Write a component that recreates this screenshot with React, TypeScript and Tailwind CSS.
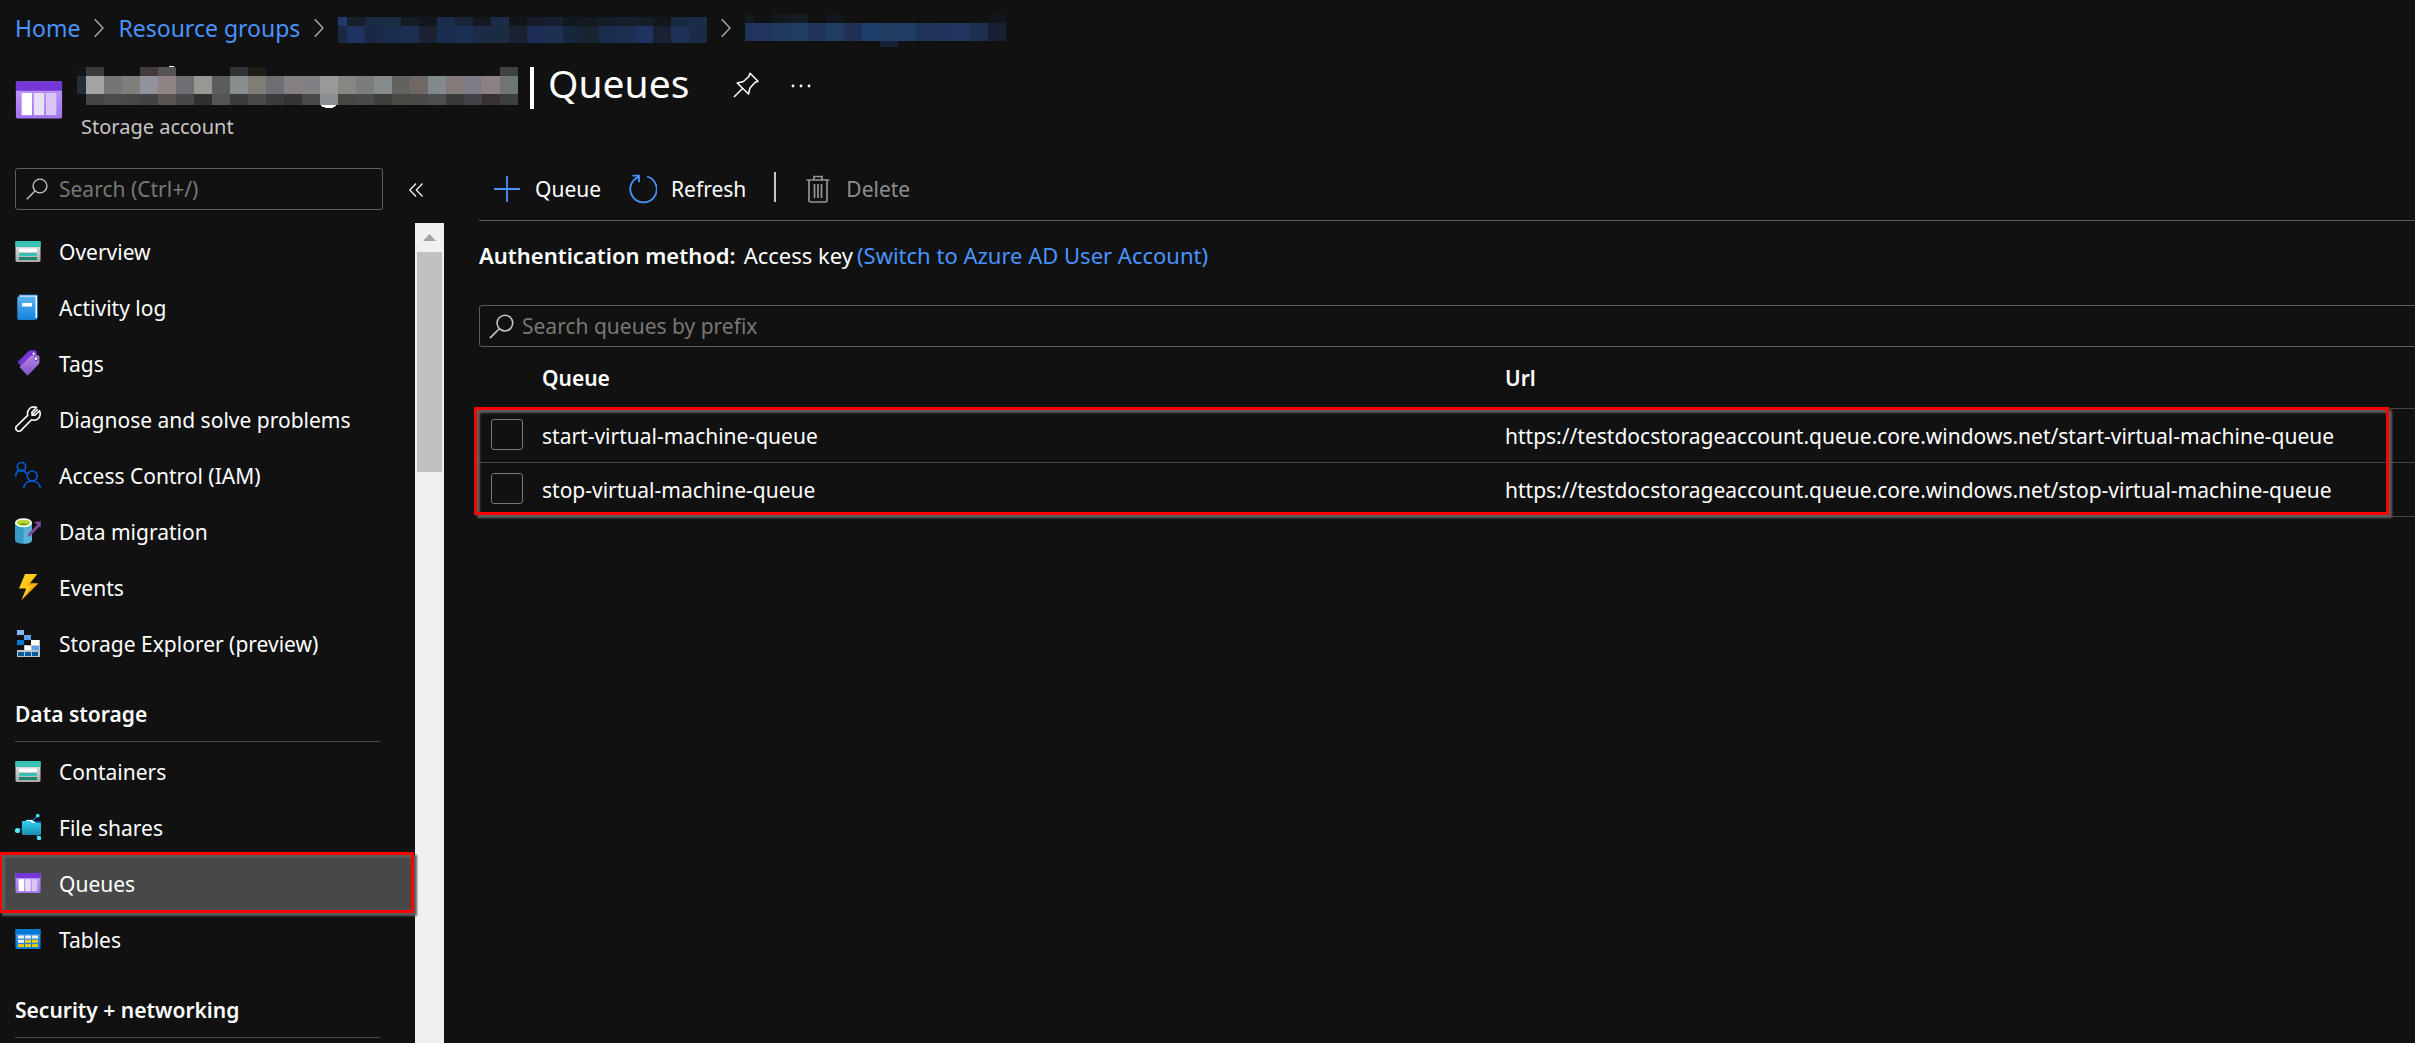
import React from "react";

type Tile = string | null;

function Mosaic({ rows, heights, firstY, label, className, extra }: {
  rows: Tile[][];
  heights: number[];
  firstY: number;
  label: string;
  className?: string;
  extra?: React.ReactNode;
}) {
  const width = 9 + 18 * (Math.max(...rows.map((r) => r.length)) - 1);
  const tops = heights.map((_, i) => firstY + heights.slice(0, i).reduce((a, b) => a + b, 0));
  const height = 44;
  return (
    <svg role="img" aria-label={label} width={width} height={height} viewBox={`0 0 ${width} ${height}`} shapeRendering="crispEdges" className={className}>
      {extra}
      {rows.map((row, r) =>
        row.map((c, i) =>
          c ? <rect key={`${r}-${i}`} x={i === 0 ? 0 : 9 + 18 * (i - 1)} y={tops[r]} width={i === 0 ? 9 : 18} height={heights[r]} fill={c} /> : null,
        ),
      )}
    </svg>
  );
}

const groupTiles: Tile[][] = [
  ["#20386a", "#16202b", "#1a2b45", "#1a2b42", "#151c26", "#12171d", "#1a2c4b", "#172438", "#15181f", "#1b2c48", "#121619", "#161c2a", "#152030", "#12181f", "#131a22", "#141d28", "#16202e", "#151d29", "#12171b", "#192a40", "#1a2c47"],
  ["#1b2844", "#1f3260", "#1b2843", "#1b2d4e", "#1b2f50", "#1a2131", "#1a2d4e", "#1b3053", "#1b2b45", "#1a2b42", "#1a2133", "#1c2c54", "#1d304f", "#17263f", "#18242e", "#1b2d4c", "#1c2f4e", "#1f3260", "#1b2132", "#1d3257", "#1b2b45"],
];

const accountTiles: Tile[][] = [
  ["#12181e", null, "#13171f", "#131c23", null, "#11151c", null, null, null, null, null, null, null, null, "#12151c"],
  ["#1e345e", "#20345f", "#20395f", "#213d60", "#1e345a", "#203c62", "#1f3052", "#203e6b", "#203c60", "#203e65", "#1e3358", "#1e3459", "#203660", "#1d304e", "#182034"],
  [null, null, null, null, null, null, null, null, "#182134"],
];

const titleTiles: Tile[][] = [
  ["#111619", "#3a3b3a", null, null, "#413b3e", "#575253", null, null, null, "#2f3334", "#201c17", null, null, null, null, null, null, null, null, null, null, null, null, null, "#3f4242"],
  ["#252d37", "#a2a3a2", "#757575", "#7e7e7b", "#92929c", "#918583", "#6e6e73", "#989893", "#5b5e5d", "#888d8e", "#7e7d76", "#6f6e75", "#868180", "#838085", "#98999b", "#868682", "#7c7c7b", "#868b8b", "#62625f", "#6f6864", "#838a8d", "#847a78", "#7d7c87", "#8c8282", "#707576"],
  [null, "#444546", "#4b4b4b", "#494845", "#434345", "#5b5552", "#47484a", "#303030", "#555556", "#3b3b3b", "#4a4a4a", "#3b3b3b", "#343434", "#4c4a48", "#8b8e92", "#474643", "#4a4a4a", "#3e3e3b", "#4a4946", "#4a4a48", "#4c4e50", "#38393b", "#454247", "#363233", "#3c3f3f"],
];

function Chevron() {
  return (
    <svg aria-hidden="true" width="10" height="20" viewBox="0 0 10 20" fill="none" stroke="#b3b0ad" strokeWidth="1.3" className="shrink-0">
      <path d="M0.7 1.2 9 10 0.7 18.8" />
    </svg>
  );
}

function SearchIcon({ size = 22 }: { size?: number }) {
  return (
    <svg aria-hidden="true" width={size} height={size} viewBox="0 0 22 22" fill="none" stroke="#c8c6c4" strokeWidth="1.4" className="shrink-0">
      <circle cx="14" cy="8" r="6.9" />
      <path d="M9 13 0.8 21.2" />
    </svg>
  );
}

function ListIcon() {
  return (
    <svg width="26" height="26" viewBox="0 0 26 26">
      <defs>
        <linearGradient id="listBase" x1="0" y1="0" x2="0" y2="1">
          <stop offset="0" stopColor="#ececec" />
          <stop offset="1" stopColor="#a8a8a8" />
        </linearGradient>
      </defs>
      <rect x="0.5" y="3" width="25" height="21" rx="1" fill="url(#listBase)" />
      <path d="M1.5 3h23a1 1 0 0 1 1 1v5H0.500V4a1 1 0 0 1 1-1z" fill="#37c2b1" />
      <rect x="4" y="10.500" width="18" height="3.500" fill="#fff" />
      <rect x="4" y="15" width="18" height="3" fill="#37c2b1" />
      <rect x="4" y="19" width="18" height="3" fill="#258277" />
    </svg>
  );
}

function ActivityIcon() {
  return (
    <svg width="26" height="26" viewBox="0 0 26 26">
      <defs>
        <linearGradient id="book" x1="0" y1="0" x2="0" y2="1">
          <stop offset="0" stopColor="#5eb2f0" />
          <stop offset="1" stopColor="#1483dc" />
        </linearGradient>
      </defs>
      <path d="M4 0.500h17.500a1.500 1.500 0 0 1 1.500 1.500v20c0 2-1 4-2.500 4H4z" fill="#1a77c9" />
      <path d="M4.500 1.500H22V24h-3V4H4.500z" fill="#fff" />
      <path d="M3.500 2.500H19.500a1 1 0 0 1 1 1V26H4A1.700 1.700 0 0 1 2.300 24.300V3.700A1.200 1.200 0 0 1 3.500 2.500z" fill="url(#book)" />
      <rect x="7" y="9" width="10" height="3.500" fill="#fff" />
    </svg>
  );
}

function TagsIcon() {
  return (
    <svg width="26" height="26" viewBox="0 0 26 26">
      <defs>
        <linearGradient id="tag" x1="0" y1="0" x2="0" y2="1">
          <stop offset="0" stopColor="#b98ae6" />
          <stop offset="1" stopColor="#7f50c4" />
        </linearGradient>
      </defs>
      <path d="M2.500 12 13.500 1.200Q14.500 0.300 16 0.300h4q1.800 0 1.800 1.800V7L8 18.500z" fill="#7637d8" />
      <path d="M4.500 17 15.500 6.200Q16.500 5.300 18 5.200h4.500q1.900 0 1.900 1.900v5.200q0 1.300-1 2.200L12.500 25.700z" fill="url(#tag)" />
      <circle cx="18.700" cy="3.700" r="1.700" fill="#fff" stroke="#4d2392" strokeWidth="0.800" />
      <circle cx="21" cy="8.700" r="1.900" fill="#fff" stroke="#5d3aa5" strokeWidth="1" />
    </svg>
  );
}

function WrenchIcon() {
  return (
    <svg width="26" height="26" viewBox="0 0 26 26" fill="none" stroke="#fff" strokeWidth="1.600" strokeLinejoin="round">
      <path d="M22.800 3.200 18.500 7.500 18 8.500 20 9.200 24.500 4.700Q26.300 9 23.500 12.200 20.700 15.200 16.500 13.800L6 24.400Q4.200 26 2 24.600-0.100 22.700 1.300 20.500L12.700 9.400Q11.800 5.200 14.600 2.500 17.500-0.100 21.500 1.500L17 6V9.300H20" />
    </svg>
  );
}

function PeopleIcon() {
  return (
    <svg width="26" height="26" viewBox="0 0 26 26" fill="none" stroke="#015cda" strokeWidth="1.600">
      <circle cx="6.500" cy="4.700" r="4.200" />
      <circle cx="17.200" cy="14" r="5" />
      <path d="M0.700 14.500C0.700 6.800 9.500 6.800 11.500 12M8.600 26.500C9.500 16.500 24 16.500 25.500 26.500" />
    </svg>
  );
}

function MigrationIcon() {
  return (
    <svg width="26" height="26" viewBox="0 0 26 26">
      <path d="M0 4.500V22q0 3.700 8.500 3.700T17 22V4.500z" fill="#3999c6" />
      <path d="M8.500 4.500V25.700Q17 25.700 17 22V4.500z" fill="#5bb0d5" />
      <ellipse cx="8.500" cy="4.700" rx="8.500" ry="4.500" fill="#fff" />
      <ellipse cx="8.500" cy="4.700" rx="6.800" ry="3" fill="#b8d432" />
      <path d="M4 6.200q4.500-2 9 0-4 2.300-9 0z" fill="#5ea60a" />
      <path d="M14.500 16.800 22.500 8.500" stroke="#804998" strokeWidth="3" strokeLinecap="round" />
      <path d="M19.300 4 26 3.300 25.400 10z" fill="#804998" />
    </svg>
  );
}

function BoltIcon() {
  return (
    <svg width="26" height="26" viewBox="0 0 26 26">
      <path d="M10 0H22.200L14.700 9.500H23L6.500 26 11.200 14.500H4z" fill="#ffca1c" />
      <path d="M22.200 0 14.700 9.500H23L6.500 26 17.500 11.500H11.500z" fill="#f9a70a" />
    </svg>
  );
}

function ExplorerIcon() {
  return (
    <svg width="26" height="28" viewBox="0 0 26 28" shapeRendering="crispEdges">
      <path d="M17 11h8v17H2v-7h7v-5h8z" fill="#bcc3cb" />
      <rect x="2" y="1" width="7" height="5" fill="#83b9f9" />
      <rect x="9" y="6" width="7" height="5" fill="#5ea0ef" />
      <rect x="2" y="11" width="7" height="5" fill="#0078d4" />
      <rect x="16" y="11" width="8" height="5" fill="#fff" />
      <rect x="10" y="17" width="6" height="4" fill="#fff" />
      <rect x="17" y="17" width="7" height="4" fill="#5ea0ef" />
      <rect x="3" y="23" width="6" height="4" fill="#005ba1" />
      <rect x="10" y="23" width="6" height="4" fill="#005ba1" />
      <rect x="17" y="23" width="6" height="4" fill="#005ba1" />
    </svg>
  );
}

function SharesIcon() {
  return (
    <svg width="26" height="26" viewBox="0 0 26 26">
      <defs>
        <linearGradient id="folder" x1="0" y1="0" x2="0" y2="1">
          <stop offset="0" stopColor="#32d4f5" />
          <stop offset="1" stopColor="#198ab3" />
        </linearGradient>
      </defs>
      <path d="M2.500 16.500 12 13 22.500 1.500M15 13l9 11" stroke="#0f6cbd" strokeWidth="1.200" fill="none" />
      <path d="M11 5.500h6l2 1.500h6.500q0.500 0 0.500 0.500v6H11z" fill="#005ba1" />
      <path d="M11 6h6l4 3h-8z" fill="#fff" />
      <path d="M8 7h6.500l3 2H25q1 0 1 1v10q0 1-1 1H8q-1 0-1-1V8q0-1 1-1z" fill="url(#folder)" />
      <circle cx="2.500" cy="16.500" r="2.600" fill="#50e6ff" />
      <circle cx="22.800" cy="1.700" r="1.800" fill="#50e6ff" />
      <circle cx="24" cy="24" r="2.200" fill="#50e6ff" />
    </svg>
  );
}

function QueueIcon({ large = false }: { large?: boolean }) {
  return (
    <svg aria-hidden="true" width={large ? 48 : 26} height={large ? 48 : 26} viewBox="0 0 26 26" className="shrink-0">
      <defs>
        <linearGradient id="queueBase" x1="0" y1="0" x2="0" y2="1">
          <stop offset="0" stopColor="#c09cfa" />
          <stop offset="1" stopColor="#a174ee" />
        </linearGradient>
      </defs>
      <rect x="0.500" y="3" width="25" height="20" rx="0.800" fill="url(#queueBase)" />
      <path d="M1.300 3h23.400a0.800 0.800 0 0 1 0.800 0.800V8H0.500V3.800A0.800 0.800 0 0 1 1.300 3z" fill="#7637d8" />
      <rect x="3.600" y="9.200" width="5.600" height="12" fill="#fff" />
      <rect x="10.200" y="9.200" width="5.600" height="12" fill="#e9dffb" />
      <rect x="16.800" y="9.200" width="5.600" height="12" fill="#d8c6f6" />
    </svg>
  );
}

function TablesIcon() {
  const cells = [0, 1, 2].flatMap((r) => [0, 1, 2].map((c) => ({ r, c })));
  return (
    <svg width="26" height="26" viewBox="0 0 26 26">
      <defs>
        <linearGradient id="tableBase" x1="0" y1="0" x2="0" y2="1">
          <stop offset="0" stopColor="#5ea0ef" />
          <stop offset="1" stopColor="#0078d4" />
        </linearGradient>
      </defs>
      <rect x="0.500" y="3" width="25" height="20" rx="0.800" fill="url(#tableBase)" />
      <path d="M0.500 3h25v5h-25z" fill="#0078d4" />
      {cells.map(({ r, c }) => (
        <rect key={`${r}${c}`} x={3 + c * 7} y={9.500 + r * 4.300} width="6" height="3" fill={r === 2 || (r === 1 && c > 0) ? "#f2cc0c" : "#e8f1fc"} />
      ))}
    </svg>
  );
}

function NavItem({ icon, label, active = false }: { icon: React.ReactNode; label: string; active?: boolean }) {
  return (
    <li className="relative">
      <a href="#" aria-current={active ? "page" : undefined} className={`flex h-14 items-center gap-[18px] pl-[15px] ${active ? "bg-[#484848]" : ""}`}>
        <span aria-hidden="true" className="flex w-[26px] shrink-0 justify-center pb-[2px]">{icon}</span>
        <span className="whitespace-nowrap">{label}</span>
      </a>
      {active && <span aria-hidden="true" className="pointer-events-none absolute -top-1 right-px -bottom-px -left-px z-10 border-[3px] border-[#ff0000] shadow-[3px_3px_2px_#5e5e5e,inset_3px_3px_2px_#5e5e5e]" />}
    </li>
  );
}

function NavHeading({ children }: { children: React.ReactNode }) {
  return (
    <div className="h-[72px] pl-[15px] pr-[35px]">
      <h2 className="flex h-[70px] items-end border-b border-[#4a4a4a] pb-3 font-semibold">{children}</h2>
    </div>
  );
}

const queues = ["start-virtual-machine-queue", "stop-virtual-machine-queue"];

export default function App() {
  return (
    <div className="flex h-screen flex-col overflow-hidden bg-[#111111] font-['Noto_Sans','Open_Sans',sans-serif] text-[21px] leading-[30px] text-white">
      <nav aria-label="Breadcrumb" className="flex h-14 shrink-0 items-center gap-[14px] pl-[15px] text-[23px] text-[#4894fe]">
        <a href="#" className="whitespace-nowrap">Home</a>
        <Chevron />
        <a href="#" className="whitespace-nowrap">Resource groups</a>
        <Chevron />
        <a href="#"><Mosaic label="Hidden resource group" rows={groupTiles} heights={[9, 17]} firstY={11} /></a>
        <Chevron />
        <a href="#"><Mosaic label="Hidden storage account" rows={accountTiles} heights={[9, 18, 6]} firstY={8} /></a>
      </nav>

      <header className="flex h-28 shrink-0 items-start pl-[15px]">
        <div className="pt-5"><QueueIcon large /></div>
        <div className="pl-[14px]">
          <div className="flex h-14 items-center">
            <h1 className="flex items-center text-[39px] leading-[56px] whitespace-nowrap">
              <Mosaic
                label="Hidden account name"
                rows={titleTiles}
                heights={[9, 18, 11]}
                firstY={2}
                className="mt-[6px]"
                extra={<><rect x="92" y="1" width="5" height="1" fill="#fff" /><path d="M243 39h17q-1 4-8 4t-9-4z" fill="#fff" /></>}
              />
              <span aria-hidden="true" className="mt-2 ml-3 h-[42px] w-1 bg-white" />
              <span className="ml-[14px] pb-0.5">Queues</span>
            </h1>
            <button aria-label="Pin to dashboard" className="ml-11 pt-0.5">
              <svg width="26" height="26" viewBox="0 0 26 26" fill="none" stroke="#fff" strokeWidth="1.500" strokeLinejoin="round">
                <path d="M1 25 9.500 16.500M17 1.200 25 9.200 22 10.500 17 16 15.500 22 4.200 11 10.500 9.500 15.800 4.500z" />
              </svg>
            </button>
            <button aria-label="More" className="ml-8 pt-1">
              <svg width="20" height="4" viewBox="0 0 20 4" fill="#fff"><circle cx="2" cy="2" r="1.400" /><circle cx="10" cy="2" r="1.400" /><circle cx="18" cy="2" r="1.400" /></svg>
            </button>
          </div>
          <p className="pl-1 text-[20px] text-[#c8c6c4]">Storage account</p>
        </div>
      </header>

      <div className="flex min-h-0 flex-1">
        <aside className="flex w-[444px] shrink-0 flex-col">
          <div className="flex h-[55px] shrink-0 items-start pl-[15px]">
            <label className="flex h-[42px] w-[368px] items-center gap-[11px] rounded-[3px] border border-[#605e5c] pl-[10px]">
              <SearchIcon />
              <input type="text" aria-label="Search menu" placeholder="Search (Ctrl+/)" className="min-w-0 flex-1 bg-transparent outline-none placeholder:text-[#797775]" />
            </label>
            <button aria-label="Collapse menu" className="mt-[15px] ml-[26px]">
              <svg width="14" height="14" viewBox="0 0 14 14" fill="none" stroke="#fff" strokeWidth="1.200"><path d="M7 0.500 0.800 7 7 13.500M13.500 0.500 7.300 7 13.500 13.500" /></svg>
            </button>
          </div>
          <div className="flex min-h-0 flex-1">
            <nav aria-label="Storage account menu" className="w-[415px] shrink-0 pt-px">
              <ul>
                <NavItem icon={<ListIcon />} label="Overview" />
                <NavItem icon={<ActivityIcon />} label="Activity log" />
                <NavItem icon={<TagsIcon />} label="Tags" />
                <NavItem icon={<WrenchIcon />} label="Diagnose and solve problems" />
                <NavItem icon={<PeopleIcon />} label="Access Control (IAM)" />
                <NavItem icon={<MigrationIcon />} label="Data migration" />
                <NavItem icon={<BoltIcon />} label="Events" />
                <NavItem icon={<ExplorerIcon />} label="Storage Explorer (preview)" />
              </ul>
              <NavHeading>Data storage</NavHeading>
              <ul>
                <NavItem icon={<ListIcon />} label="Containers" />
                <NavItem icon={<SharesIcon />} label="File shares" />
                <NavItem icon={<QueueIcon />} label="Queues" active />
                <NavItem icon={<TablesIcon />} label="Tables" />
              </ul>
              <NavHeading>Security + networking</NavHeading>
            </nav>
            <div aria-hidden="true" className="flex flex-1 flex-col bg-[#f0f0f0] px-0.5">
              <div className="flex h-[29px] items-center justify-center">
                <svg width="13" height="7" viewBox="0 0 13 7" fill="#a3a3a3"><path d="M6.500 0 13 7H0z" /></svg>
              </div>
              <div className="h-[220px] bg-[#c1c1c1]" />
            </div>
          </div>
        </aside>

        <main className="min-w-0 flex-1 pl-[35px]">
          <div className="flex h-[53px] items-start border-b border-[#605e5c] pl-[14px]">
            <button className="flex h-[42px] items-center gap-[14px]">
              <svg aria-hidden="true" width="28" height="28" viewBox="0 0 28 28" stroke="#4894fe" strokeWidth="1.800"><path d="M1 14H27M14 1V27" /></svg>
              Queue
            </button>
            <button className="ml-7 flex h-[42px] items-center gap-[14px]">
              <svg aria-hidden="true" width="28" height="30" viewBox="0 0 28 30" fill="none" stroke="#4894fe" strokeWidth="1.800">
                <path d="M18 2.500A13.200 13.200 0 1 1 9.500 3M3.500 1.700H10V8.200M10 1.700 7 5" />
              </svg>
              Refresh
            </button>
            <span aria-hidden="true" className="mt-1 ml-7 h-[30px] w-0.5 bg-[#c8c6c4]" />
            <button disabled className="ml-[30px] flex h-[42px] items-center gap-4 text-[#8f8f8f]">
              <svg aria-hidden="true" width="24" height="28" viewBox="0 0 24 28" fill="none" stroke="#979593" strokeWidth="1.700">
                <path d="M0.500 5H23.500M8 5V1.500H16V5M3 5V25.500Q3 27 4.500 27H19.500Q21 27 21 25.500V5M8.500 9V23M12 9V23M15.500 9V23" />
              </svg>
              Delete
            </button>
          </div>

          <p className="flex h-[84px] items-start pt-[19px] text-[22px] whitespace-nowrap">
            <strong className="font-semibold">Authentication method:</strong>
            <span className="ml-2">Access key</span>
            <a href="#" className="ml-1 text-[#4894fe]">(Switch to Azure AD User Account)</a>
          </p>

          <label className="-mr-1 flex h-[42px] items-center gap-2 rounded-[3px] border border-[#605e5c] pl-[9px]">
            <SearchIcon size={25} />
            <input type="text" aria-label="Search queues" placeholder="Search queues by prefix" className="min-w-0 flex-1 bg-transparent outline-none placeholder:text-[#797775]" />
          </label>

          <div className="relative">
            <table className="w-full table-fixed border-collapse text-left">
              <colgroup>
                <col className="w-[63px]" />
                <col className="w-[963px]" />
                <col />
              </colgroup>
              <thead>
                <tr className="h-[61px] border-b border-[#484644]">
                  <th scope="col" aria-label="Select" />
                  <th scope="col" className="pt-0.5 font-semibold">Queue</th>
                  <th scope="col" className="pt-0.5 font-semibold">Url</th>
                </tr>
              </thead>
              <tbody>
                {queues.map((q) => (
                  <tr key={q} className="h-[54px] border-b border-[#484644]">
                    <td className="pb-0.5 pl-3">
                      <input type="checkbox" aria-label={`Select ${q}`} className="block h-[31px] w-8 appearance-none rounded-[3px] border border-[#797775] checked:bg-[#4894fe]" />
                    </td>
                    <td className="pt-0.5">{q}</td>
                    <td className="pt-0.5 whitespace-nowrap">https://testdocstorageaccount.queue.core.windows.net/{q}</td>
                  </tr>
                ))}
              </tbody>
            </table>
            <div aria-hidden="true" className="pointer-events-none absolute top-[60px] right-[26px] bottom-0.5 -left-[5px] border-[3px] border-[#ff0000] shadow-[3px_3px_2px_#5e5e5e,inset_3px_3px_2px_#5e5e5e]" />
          </div>
        </main>
      </div>
    </div>
  );
}
